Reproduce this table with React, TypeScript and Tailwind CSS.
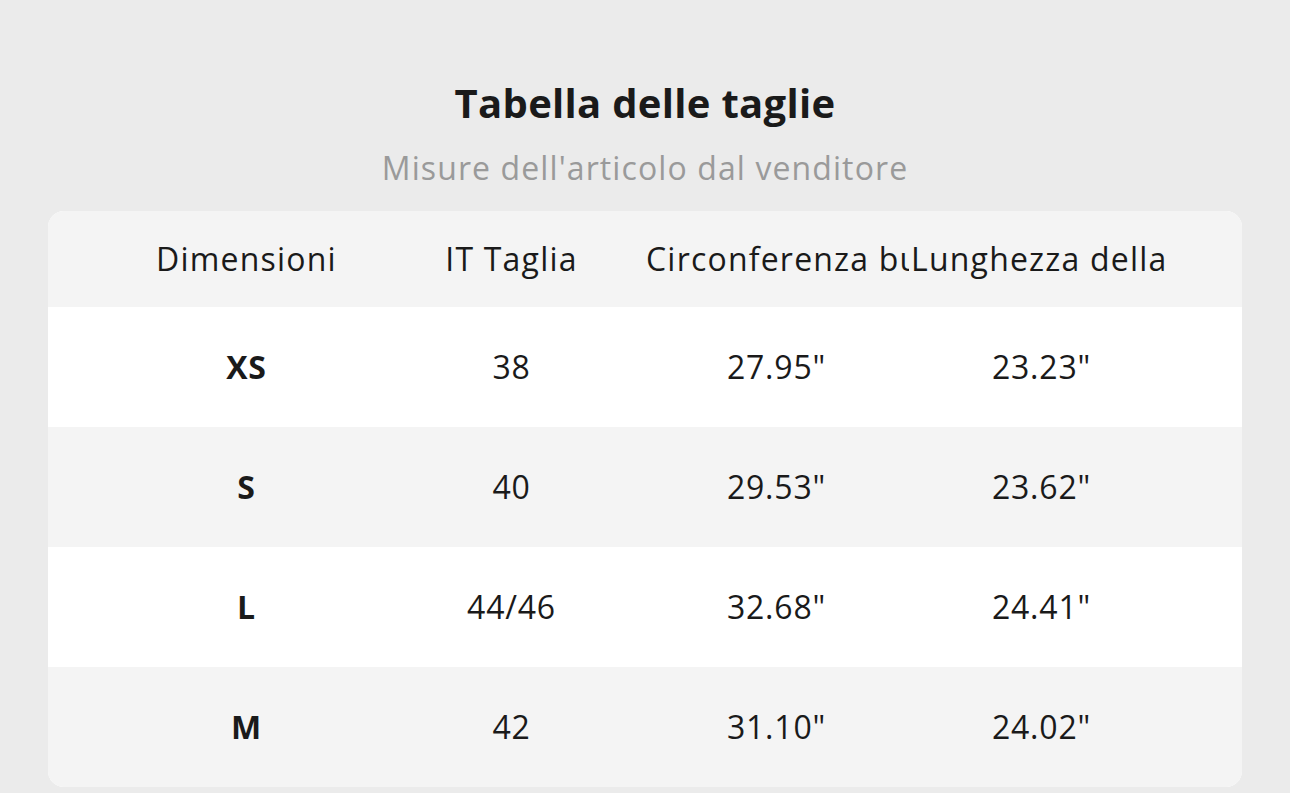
const headers = ['Dimensioni', 'IT Taglia', 'Circonferenza busto', 'Lunghezza della schiena'];

const rows = [
	{ size: 'XS', it: '38', bust: '27.95"', length: '23.23"' },
	{ size: 'S', it: '40', bust: '29.53"', length: '23.62"' },
	{ size: 'L', it: '44/46', bust: '32.68"', length: '24.41"' },
	{ size: 'M', it: '42', bust: '31.10"', length: '24.02"' },
];

export default function App() {
	return (
		<div
			className="min-h-[793px] w-full bg-[#ebebeb] px-12 pt-[78px] text-[#1a1a1a]"
			style={{ fontFamily: '"Open Sans", Lato, sans-serif' }}
		>
			<h1 className="text-center text-[40px] font-bold leading-[50px] tracking-[0.3px]">
				Tabella delle taglie
			</h1>
			<p className="mt-[20px] text-center text-[32px] leading-[40px] tracking-[1.1px] text-[#9a9a9a]">
				Misure dell'articolo dal venditore
			</p>
			<div className="mt-[23px] overflow-hidden rounded-2xl bg-white">
				<div className="flex h-24 items-center bg-[#f4f4f4] px-[66px]">
					{headers.map((h) => (
						<div
							className="w-[265px] overflow-hidden whitespace-nowrap px-[2px] text-center text-[32px] tracking-[1.2px]"
							key={h}
						>
							{h}
						</div>
					))}
				</div>
				{rows.map((r, i) => (
					<div
						className={`flex h-[120px] items-center px-[66px] text-[32px] tracking-[0.8px] ${i % 2 === 1 ? 'bg-[#f4f4f4]' : 'bg-white'}`}
						key={r.size}
					>
						<div className="w-[265px] text-center font-bold">{r.size}</div>
						<div className="w-[265px] text-center">{r.it}</div>
						<div className="w-[265px] text-center">{r.bust}</div>
						<div className="w-[265px] text-center">{r.length}</div>
					</div>
				))}
			</div>
		</div>
	);
}
